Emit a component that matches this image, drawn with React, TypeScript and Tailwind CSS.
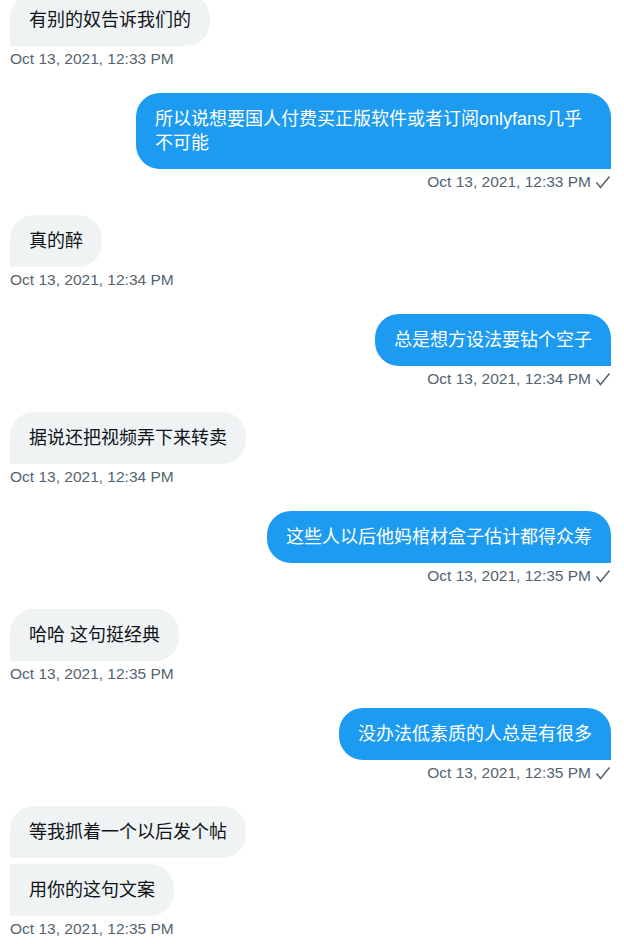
import React from 'react';

type Msg = { side: 'in' | 'out'; lines: string[]; time: string };

const messages: Msg[] = [
  { side: 'in', lines: ['有别的奴告诉我们的'], time: 'Oct 13, 2021, 12:33 PM' },
  { side: 'out', lines: ['所以说想要国人付费买正版软件或者订阅onlyfans几乎不可能'], time: 'Oct 13, 2021, 12:33 PM' },
  { side: 'in', lines: ['真的醉'], time: 'Oct 13, 2021, 12:34 PM' },
  { side: 'out', lines: ['总是想方设法要钻个空子'], time: 'Oct 13, 2021, 12:34 PM' },
  { side: 'in', lines: ['据说还把视频弄下来转卖'], time: 'Oct 13, 2021, 12:34 PM' },
  { side: 'out', lines: ['这些人以后他妈棺材盒子估计都得众筹'], time: 'Oct 13, 2021, 12:35 PM' },
  { side: 'in', lines: ['哈哈 这句挺经典'], time: 'Oct 13, 2021, 12:35 PM' },
  { side: 'out', lines: ['没办法低素质的人总是有很多'], time: 'Oct 13, 2021, 12:35 PM' },
  { side: 'in', lines: ['等我抓着一个以后发个帖', '用你的这句文案'], time: 'Oct 13, 2021, 12:35 PM' },
];

function Check() {
  return (
    <svg viewBox="0 0 16 16" className="ml-[4px] h-[16px] w-[16px]" fill="none" stroke="#536471" strokeWidth="1.5">
      <path d="M1.5 8.5l4 5L14.5 2.5" />
    </svg>
  );
}

function Group({ msg }: { msg: Msg }) {
  const out = msg.side === 'out';
  return (
    <div className={`mb-[21.5px] flex flex-col ${out ? 'items-end' : 'items-start'}`}>
      <div className={`flex flex-col gap-[6px] ${out ? 'items-end' : 'items-start'}`}>
        {msg.lines.map((line, i) => {
          const radius = out
            ? 'rounded-[24px] rounded-br-none'
            : i === 0
              ? 'rounded-[24px] rounded-bl-none'
              : 'rounded-[24px] rounded-tl-none rounded-bl-none';
          return (
            <div
              key={line}
              className={`max-w-[475px] px-[19px] py-[14px] text-[18px] leading-[24px] ${radius} ${
                out ? 'bg-[#1d9bf0] text-white' : 'bg-[#eff3f4] text-[#0f1419]'
              }`}
            >
              {line}
            </div>
          );
        })}
      </div>
      <div className="flex h-[25px] items-center pt-[1px] text-[15.5px] text-[#536471]">
        <span>{msg.time}</span>
        {out && <Check />}
      </div>
    </div>
  );
}

export default function App() {
  return (
    <div
      className="h-[944px] overflow-hidden bg-white"
      style={{ fontFamily: '"Liberation Sans", "Noto Sans CJK SC", sans-serif' }}
    >
      <div className="-mt-[6px] pl-[10px] pr-[13px]">
        {messages.map((m, i) => (
          <Group key={i} msg={m} />
        ))}
      </div>
    </div>
  );
}
